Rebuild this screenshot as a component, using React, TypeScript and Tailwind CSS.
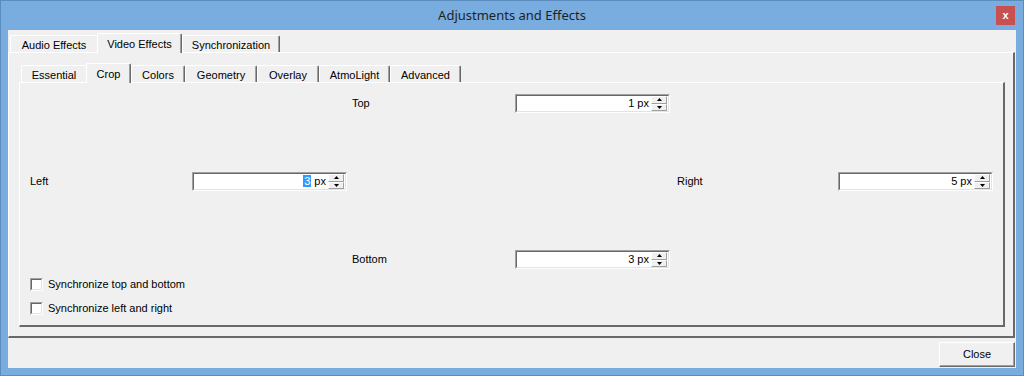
import React from "react";

const outerTabs = [
  { label: "Audio Effects", w: 87, hideRight: true },
  { label: "Video Effects", w: 85, selected: true },
  { label: "Synchronization", w: 98 },
];

const innerTabs = [
  { label: "Essential", w: 65, hideRight: true },
  { label: "Crop", w: 45, selected: true },
  { label: "Colors", w: 54 },
  { label: "Geometry", w: 72 },
  { label: "Overlay", w: 62 },
  { label: "AtmoLight", w: 71 },
  { label: "Advanced", w: 71 },
];

type TabProps = { label: string; w: number; selected?: boolean; hideRight?: boolean };

function Tab({ label, w, selected, hideRight }: TabProps) {
  return (
    <div
      style={{ width: w }}
      className={
        selected
          ? "relative z-10 -mb-px flex h-[20px] items-start justify-center rounded-t-[2px] border-t border-l border-r border-t-white border-l-white border-r-[#696969] bg-[#f0f0f0] pt-[2px] shadow-[inset_-1px_0_#a0a0a0]"
          : `flex h-[17px] items-start justify-center rounded-t-[2px] border-t border-l border-t-white border-l-white bg-[#f0f0f0] pt-[1px] ${
              hideRight ? "" : "border-r border-r-[#696969] shadow-[inset_-1px_0_#a0a0a0]"
            }`
      }
    >
      {label}
    </div>
  );
}

function Arrow({ up }: { up?: boolean }) {
  return (
    <svg width="5" height="3" viewBox="0 0 5 3">
      <path d={up ? "M2.5 0 L5 3 L0 3 Z" : "M0 0 L5 0 L2.5 3 Z"} fill="#000" />
    </svg>
  );
}

function SpinBox({ value, selected }: { value: string; selected?: boolean }) {
  return (
    <div className="flex h-[19px] w-[155px] border border-t-[#a0a0a0] border-l-[#a0a0a0] border-r-white border-b-white">
      <div className="flex flex-1 items-center justify-end border border-t-[#696969] border-l-[#696969] border-r-[#e3e3e3] border-b-[#e3e3e3] bg-white">
        <span className="leading-none">
          {selected ? <span className="bg-[#3399ff] px-px text-white">{value}</span> : value}
          {" px"}
        </span>
        <div className="ml-[2px] mr-px flex h-full w-[16px] flex-col">
          <div className="flex flex-1 items-center justify-center border border-t-white border-l-white border-r-[#a0a0a0] border-b-[#a0a0a0] bg-[#f0f0f0]">
            <Arrow up />
          </div>
          <div className="flex flex-1 items-center justify-center border border-t-white border-l-white border-r-[#a0a0a0] border-b-[#a0a0a0] bg-[#f0f0f0]">
            <Arrow />
          </div>
        </div>
      </div>
    </div>
  );
}

function CheckRow({ label }: { label: string }) {
  return (
    <div className="flex h-[19px] items-center gap-[5px]">
      <div className="h-[13px] w-[13px] border border-t-[#a0a0a0] border-l-[#a0a0a0] border-r-white border-b-white">
        <div className="h-full w-full border border-t-[#696969] border-l-[#696969] border-r-[#e3e3e3] border-b-[#e3e3e3] bg-white" />
      </div>
      <span>{label}</span>
    </div>
  );
}

const cols = "grid grid-cols-[162px_155px_168px_154px_169px_155px] items-center";

export default function App() {
  return (
    <div className="flex h-[376px] w-[1024px] flex-col border border-[#5b8cc0] bg-[#79addf] font-['Liberation_Sans',Arial,sans-serif] text-[11px] text-black">
      {/* title bar */}
      <div className="grid h-[29px] grid-cols-[1fr_auto_1fr] items-center">
        <div />
        <div className="font-['Noto_Sans',sans-serif] text-[13px] text-[#1f1f1f]">Adjustments and Effects</div>
        <div className="flex justify-end pr-[8px]">
          <div className="flex h-[19px] w-[19px] items-center justify-center bg-[#c75050] text-[11px] font-bold leading-none text-white">
            x
          </div>
        </div>
      </div>

      {/* client area */}
      <div className="mx-[7px] flex h-[338px] flex-col bg-[#f0f0f0]">
        <div className="flex h-[22px] items-end pl-[2px]">
          {outerTabs.map((t) => (
            <Tab key={t.label} {...t} />
          ))}
        </div>

        <div className="mr-px flex h-[286px] flex-col border-t border-l border-r-2 border-b-2 border-t-white border-l-white border-r-[#696969] border-b-[#696969] pt-[10px] pr-[8px] pb-[9px] pl-[10px]">
          <div className="flex h-[19px] items-end pl-[2px]">
            {innerTabs.map((t) => (
              <Tab key={t.label} {...t} />
            ))}
          </div>

          <div className="flex h-[245px] flex-col border-t border-l border-r-2 border-b-2 border-t-white border-l-white border-r-[#696969] border-b-[#696969] pt-[11px] pl-[10px]">
            <div className={`${cols} h-[19px]`}>
              <div />
              <div />
              <div className="pl-[5px]">Top</div>
              <SpinBox value="1" />
            </div>

            <div className={`${cols} mt-[59px] h-[19px]`}>
              <div>Left</div>
              <SpinBox value="3" selected />
              <div />
              <div />
              <div className="pl-[8px]">Right</div>
              <SpinBox value="5" />
            </div>

            <div className={`${cols} mt-[59px] h-[19px]`}>
              <div />
              <div />
              <div className="pl-[5px]">Bottom</div>
              <SpinBox value="3" />
            </div>

            <div className="mt-[6px] flex flex-col gap-[5px]">
              <CheckRow label="Synchronize top and bottom" />
              <CheckRow label="Synchronize left and right" />
            </div>
          </div>
        </div>

        <div className="flex justify-end pt-[4px] pr-px">
          <button className="flex h-[25px] w-[76px] items-center justify-center border border-t-white border-l-white border-r-[#696969] border-b-[#696969] bg-[#f0f0f0] shadow-[inset_-1px_-1px_#a0a0a0]">
            Close
          </button>
        </div>
      </div>
    </div>
  );
}
